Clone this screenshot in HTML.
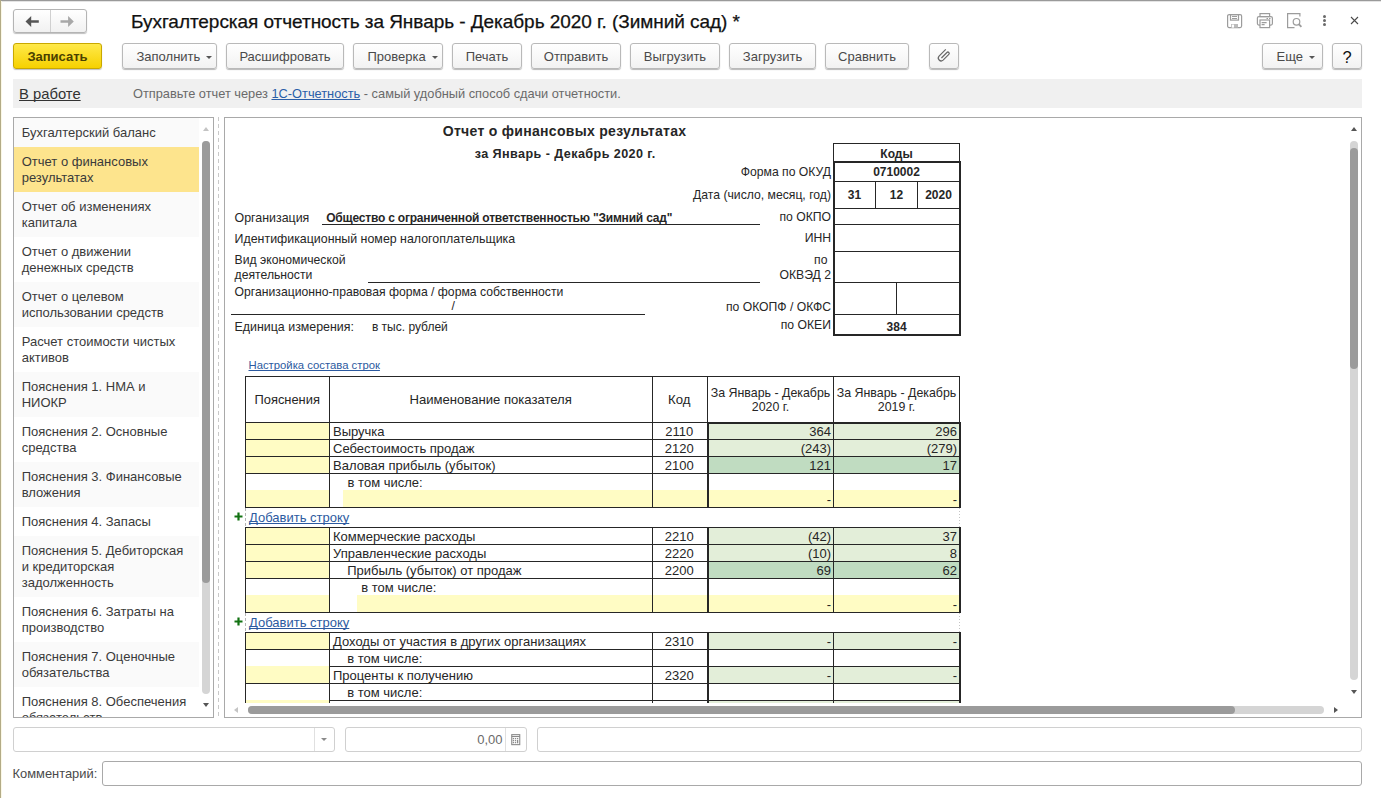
<!DOCTYPE html>
<html><head><meta charset="utf-8"><style>
html,body{margin:0;padding:0;}
body{width:1381px;height:798px;overflow:hidden;position:relative;background:#fff;font-family:"Liberation Sans",sans-serif;}
div{box-sizing:border-box;}
.btn{position:absolute;height:26px;border:1px solid #b9b9b9;border-radius:3px;background:linear-gradient(#ffffff,#f2f2f2);box-shadow:0 1px 1px rgba(0,0,0,0.28);font-size:13px;color:#4a4a4a;line-height:25px;text-align:center;white-space:nowrap;}
.dd{display:inline-block;width:0;height:0;border-left:3px solid transparent;border-right:3px solid transparent;border-top:3px solid #555;vertical-align:middle;margin-left:6px;position:relative;top:0px;}
</style></head><body>

<div style="position:absolute;left:0px;top:0px;width:1381px;height:1px;background:#9a9a9a"></div>
<div style="position:absolute;left:0px;top:1px;width:1381px;height:1px;background:#e4e4e4"></div>
<div style="position:absolute;left:0px;top:0px;width:1px;height:798px;background:#b3ab86"></div>
<div style="position:absolute;left:1px;top:1px;width:1px;height:797px;background:#fbf8e6"></div>
<div style="position:absolute;left:13px;top:9px;width:74px;height:24px;border:1px solid #b4b4b4;border-radius:3px;background:linear-gradient(#fff,#f1f1f1);box-shadow:0 1px 1px rgba(0,0,0,.25)"></div>
<div style="position:absolute;left:50px;top:10px;width:1px;height:22px;background:#d0d0d0"></div>
<svg style="position:absolute;left:25px;top:14px" width="14" height="14" viewBox="0 0 14 14"><path d="M0.5 7.5 L6.2 2 L6.2 6.2 L13.8 6.2 L13.8 8.8 L6.2 8.8 L6.2 13 Z" fill="#555"/></svg>
<svg style="position:absolute;left:60px;top:14px" width="14" height="14" viewBox="0 0 14 14"><path d="M13.8 7.5 L8.1 2 L8.1 6.2 L0.5 6.2 L0.5 8.8 L8.1 8.8 L8.1 13 Z" fill="#a8a8a8"/></svg>
<div style="position:absolute;left:131px;top:11.72px;line-height:20px;font-size:19px;font-weight:400;color:#111;white-space:nowrap;-webkit-text-stroke:0.25px #111;letter-spacing:-0.05px">Бухгалтерская отчетность за Январь - Декабрь 2020 г. (Зимний сад) *</div>
<svg style="position:absolute;left:1226px;top:13px" width="17" height="16" viewBox="0 0 17 16" fill="none" stroke="#9c9c9c" stroke-width="1.2">
<rect x="1.6" y="1.6" width="14" height="13" rx="1.5"/>
<rect x="4.5" y="1.6" width="8" height="5.5"/>
<path d="M6 3.5h5M6 5.5h5"/>
<rect x="5" y="11" width="7" height="3.6" fill="#bbb" stroke="none"/>
<rect x="5.8" y="11.6" width="2.2" height="3" fill="#fff" stroke="none"/>
</svg>
<svg style="position:absolute;left:1256px;top:12px" width="18" height="17" viewBox="0 0 18 17" fill="none" stroke="#9c9c9c" stroke-width="1.2">
<rect x="4" y="1.6" width="9.6" height="3"/>
<rect x="1.4" y="4.6" width="15" height="8.5" rx="1.5"/>
<rect x="4" y="8" width="9.6" height="7.6" fill="#fff"/>
<path d="M5.6 10.6h5M5.6 12.6h3M10.5 6.5h1.5M13 6.5h1.5"/>
</svg>
<svg style="position:absolute;left:1286px;top:12px" width="18" height="17" viewBox="0 0 18 17" fill="none" stroke="#9c9c9c" stroke-width="1.2">
<path d="M8.5 15.6H1.6V1.6h12.3v3"/>
<circle cx="10.5" cy="9.8" r="3.3"/>
<path d="M12.8 12.2l2.6 2.6" stroke-width="1.8"/>
</svg>
<div style="position:absolute;left:1322.9px;top:14.700000000000001px;width:3.2px;height:3.2px;border-radius:50%;background:#6a6a6a"></div>
<div style="position:absolute;left:1322.9px;top:18.9px;width:3.2px;height:3.2px;border-radius:50%;background:#6a6a6a"></div>
<div style="position:absolute;left:1322.9px;top:22.9px;width:3.2px;height:3.2px;border-radius:50%;background:#6a6a6a"></div>
<svg style="position:absolute;left:1350px;top:16px" width="9" height="9" viewBox="0 0 9 9"><path d="M1 1L8 8M8 1L1 8" stroke="#4a4a4a" stroke-width="1.1"/></svg>
<div style="position:absolute;left:13px;top:43px;width:89px;height:26px;border:1px solid #c9a800;border-radius:3px;background:linear-gradient(#ffe94a,#f6d100);box-shadow:0 1px 1px rgba(0,0,0,.25);font-size:13px;font-weight:700;color:#4a4100;text-align:center;line-height:25px">Записать</div>
<div class="btn" style="left:122px;top:43px;width:95px;text-align:left;padding-left:13.5px">Заполнить<span class="dd"></span></div>
<div class="btn" style="left:226px;top:43px;width:118px">Расшифровать</div>
<div class="btn" style="left:353px;top:43px;width:90px;text-align:left;padding-left:13.5px">Проверка<span class="dd"></span></div>
<div class="btn" style="left:452px;top:43px;width:70px">Печать</div>
<div class="btn" style="left:531px;top:43px;width:90px">Отправить</div>
<div class="btn" style="left:630px;top:43px;width:90px">Выгрузить</div>
<div class="btn" style="left:729px;top:43px;width:87px">Загрузить</div>
<div class="btn" style="left:825px;top:43px;width:84px">Сравнить</div>
<div class="btn" style="left:1262px;top:43px;width:61px;text-align:left;padding-left:13.5px">Еще<span class="dd"></span></div>
<div class="btn" style="left:929px;top:43px;width:30px"></div>
<svg style="position:absolute;left:935px;top:47px" width="18" height="18" viewBox="0 0 18 18" fill="none" stroke="#666" stroke-width="1.2"><path d="M10.77 2.38 L4.07 9.09 A2.85 2.85 0 0 0 8.09 13.12 L13.82 7.39 A1.35 1.35 0 0 0 11.91 5.48 L6.43 10.96"/></svg>
<div class="btn" style="left:1332px;top:43px;width:30px;font-size:16.5px;color:#111"><span style="position:relative;top:0.9px">?</span></div>
<div style="position:absolute;left:13px;top:79px;width:1349px;height:29px;background:#f0f0f0"></div>
<div style="position:absolute;left:19px;top:83.77px;line-height:20px;font-size:14.8px;font-weight:400;color:#333;white-space:nowrap;"><span style="text-decoration:underline;text-decoration-skip-ink:none">В работе</span></div>
<div style="position:absolute;left:133px;top:83.56px;line-height:20px;font-size:12.8px;font-weight:400;color:#6a6a6a;white-space:nowrap;">Отправьте отчет через <span style="color:#2a5ea8;text-decoration:underline;text-decoration-skip-ink:none">1С-Отчетность</span> - самый удобный способ сдачи отчетности.</div>
<div style="position:absolute;left:13px;top:117px;width:201px;height:601px;border:1px solid #a9a9a9;background:#fff;overflow:hidden">
<div style="position:absolute;left:0;top:0px;width:185px;height:29px;background:#fafafa"></div>
<div style="position:absolute;left:7.7px;top:4.50px;line-height:20px;font-size:13px;color:#3a3a3a;white-space:nowrap">Бухгалтерский баланс</div>
<div style="position:absolute;left:0;top:29px;width:185px;height:45px;background:#fde48d"></div>
<div style="position:absolute;left:7.7px;top:33.50px;line-height:20px;font-size:13px;color:#3a3a3a;white-space:nowrap">Отчет о финансовых</div>
<div style="position:absolute;left:7.7px;top:49.50px;line-height:20px;font-size:13px;color:#3a3a3a;white-space:nowrap">результатах</div>
<div style="position:absolute;left:0;top:74px;width:185px;height:45px;background:#fafafa"></div>
<div style="position:absolute;left:7.7px;top:78.50px;line-height:20px;font-size:13px;color:#3a3a3a;white-space:nowrap">Отчет об изменениях</div>
<div style="position:absolute;left:7.7px;top:94.50px;line-height:20px;font-size:13px;color:#3a3a3a;white-space:nowrap">капитала</div>
<div style="position:absolute;left:0;top:119px;width:185px;height:45px;background:#ffffff"></div>
<div style="position:absolute;left:7.7px;top:123.50px;line-height:20px;font-size:13px;color:#3a3a3a;white-space:nowrap">Отчет о движении</div>
<div style="position:absolute;left:7.7px;top:139.50px;line-height:20px;font-size:13px;color:#3a3a3a;white-space:nowrap">денежных средств</div>
<div style="position:absolute;left:0;top:164px;width:185px;height:45px;background:#fafafa"></div>
<div style="position:absolute;left:7.7px;top:168.50px;line-height:20px;font-size:13px;color:#3a3a3a;white-space:nowrap">Отчет о целевом</div>
<div style="position:absolute;left:7.7px;top:184.50px;line-height:20px;font-size:13px;color:#3a3a3a;white-space:nowrap">использовании средств</div>
<div style="position:absolute;left:0;top:209px;width:185px;height:45px;background:#ffffff"></div>
<div style="position:absolute;left:7.7px;top:213.50px;line-height:20px;font-size:13px;color:#3a3a3a;white-space:nowrap">Расчет стоимости чистых</div>
<div style="position:absolute;left:7.7px;top:229.50px;line-height:20px;font-size:13px;color:#3a3a3a;white-space:nowrap">активов</div>
<div style="position:absolute;left:0;top:254px;width:185px;height:45px;background:#fafafa"></div>
<div style="position:absolute;left:7.7px;top:258.50px;line-height:20px;font-size:13px;color:#3a3a3a;white-space:nowrap">Пояснения 1. НМА и</div>
<div style="position:absolute;left:7.7px;top:274.50px;line-height:20px;font-size:13px;color:#3a3a3a;white-space:nowrap">НИОКР</div>
<div style="position:absolute;left:0;top:299px;width:185px;height:45px;background:#ffffff"></div>
<div style="position:absolute;left:7.7px;top:303.50px;line-height:20px;font-size:13px;color:#3a3a3a;white-space:nowrap">Пояснения 2. Основные</div>
<div style="position:absolute;left:7.7px;top:319.50px;line-height:20px;font-size:13px;color:#3a3a3a;white-space:nowrap">средства</div>
<div style="position:absolute;left:0;top:344px;width:185px;height:45px;background:#fafafa"></div>
<div style="position:absolute;left:7.7px;top:348.50px;line-height:20px;font-size:13px;color:#3a3a3a;white-space:nowrap">Пояснения 3. Финансовые</div>
<div style="position:absolute;left:7.7px;top:364.50px;line-height:20px;font-size:13px;color:#3a3a3a;white-space:nowrap">вложения</div>
<div style="position:absolute;left:0;top:389px;width:185px;height:29px;background:#ffffff"></div>
<div style="position:absolute;left:7.7px;top:393.50px;line-height:20px;font-size:13px;color:#3a3a3a;white-space:nowrap">Пояснения 4. Запасы</div>
<div style="position:absolute;left:0;top:418px;width:185px;height:61px;background:#fafafa"></div>
<div style="position:absolute;left:7.7px;top:422.50px;line-height:20px;font-size:13px;color:#3a3a3a;white-space:nowrap">Пояснения 5. Дебиторская</div>
<div style="position:absolute;left:7.7px;top:438.50px;line-height:20px;font-size:13px;color:#3a3a3a;white-space:nowrap">и кредиторская</div>
<div style="position:absolute;left:7.7px;top:454.50px;line-height:20px;font-size:13px;color:#3a3a3a;white-space:nowrap">задолженность</div>
<div style="position:absolute;left:0;top:479px;width:185px;height:45px;background:#ffffff"></div>
<div style="position:absolute;left:7.7px;top:483.50px;line-height:20px;font-size:13px;color:#3a3a3a;white-space:nowrap">Пояснения 6. Затраты на</div>
<div style="position:absolute;left:7.7px;top:499.50px;line-height:20px;font-size:13px;color:#3a3a3a;white-space:nowrap">производство</div>
<div style="position:absolute;left:0;top:524px;width:185px;height:45px;background:#fafafa"></div>
<div style="position:absolute;left:7.7px;top:528.50px;line-height:20px;font-size:13px;color:#3a3a3a;white-space:nowrap">Пояснения 7. Оценочные</div>
<div style="position:absolute;left:7.7px;top:544.50px;line-height:20px;font-size:13px;color:#3a3a3a;white-space:nowrap">обязательства</div>
<div style="position:absolute;left:0;top:569px;width:185px;height:45px;background:#ffffff"></div>
<div style="position:absolute;left:7.7px;top:573.50px;line-height:20px;font-size:13px;color:#3a3a3a;white-space:nowrap">Пояснения 8. Обеспечения</div>
<div style="position:absolute;left:7.7px;top:589.50px;line-height:20px;font-size:13px;color:#3a3a3a;white-space:nowrap">обязательств</div>
</div>
<div style="position:absolute;left:202px;top:141px;width:8px;height:553px;border-radius:4px;background:#d5d5d5"></div>
<div style="position:absolute;left:202px;top:141px;width:8px;height:442px;border-radius:4px;background:#9b9b9b"></div>
<div style="position:absolute;left:203px;top:127px;width:0;height:0;border-left:3.5px solid transparent;border-right:3.5px solid transparent;border-bottom:4px solid #c4c4c4"></div>
<div style="position:absolute;left:203px;top:703px;width:0;height:0;border-left:3.5px solid transparent;border-right:3.5px solid transparent;border-top:4px solid #555"></div>
<div style="position:absolute;left:218px;top:117px;width:1px;height:601px;background:repeating-linear-gradient(#c9c9c9 0 4px,transparent 4px 7px)"></div>
<div style="position:absolute;left:224px;top:117px;width:1138px;height:601px;border:1px solid #a9a9a9;background:#fff"></div>
<div style="position:absolute;left:1350px;top:141px;width:8px;height:539px;border-radius:4px;background:#d5d5d5"></div>
<div style="position:absolute;left:1350px;top:148px;width:8px;height:221px;border-radius:4px;background:#9b9b9b"></div>
<div style="position:absolute;left:1351px;top:127px;width:0;height:0;border-left:3.5px solid transparent;border-right:3.5px solid transparent;border-bottom:4px solid #555"></div>
<div style="position:absolute;left:1351px;top:690px;width:0;height:0;border-left:3.5px solid transparent;border-right:3.5px solid transparent;border-top:4px solid #555"></div>
<div style="position:absolute;left:248px;top:706px;width:1076px;height:8px;border-radius:4px;background:#d5d5d5"></div>
<div style="position:absolute;left:248px;top:706px;width:987px;height:8px;border-radius:4px;background:#9b9b9b"></div>
<div style="position:absolute;left:234px;top:706.5px;width:0;height:0;border-top:3.5px solid transparent;border-bottom:3.5px solid transparent;border-right:4px solid #c4c4c4"></div>
<div style="position:absolute;left:1334px;top:706.5px;width:0;height:0;border-top:3.5px solid transparent;border-bottom:3.5px solid transparent;border-left:4px solid #555"></div>
<div style="position:absolute;left:225px;top:118px;width:1120px;height:585px;overflow:hidden">
<div style="position:absolute;left:139.60000000000002px;width:400px;top:3.15px;line-height:20px;font-size:14px;font-weight:700;color:#262626;white-space:nowrap;text-align:center;letter-spacing:0.3px">Отчет о финансовых результатах</div>
<div style="position:absolute;left:140.20000000000005px;width:400px;top:25.93px;line-height:20px;font-size:12.6px;font-weight:700;color:#262626;white-space:nowrap;text-align:center;letter-spacing:0.42px">за Январь - Декабрь 2020 г.</div>
<div style="position:absolute;left:608px;top:25px;width:127px;height:20px;border:1px solid #262626;border-bottom:none"></div>
<div style="position:absolute;left:471.5px;width:400px;top:25.84px;line-height:20px;font-size:12px;font-weight:700;color:#262626;white-space:nowrap;text-align:center;">Коды</div>
<div style="position:absolute;left:608px;top:43px;width:128px;height:175px;border:2px solid #262626"></div>
<div style="position:absolute;left:610px;top:63px;width:124px;height:1px;background:#262626"></div>
<div style="position:absolute;left:610px;top:90px;width:124px;height:1px;background:#262626"></div>
<div style="position:absolute;left:610px;top:106px;width:124px;height:1px;background:#262626"></div>
<div style="position:absolute;left:610px;top:133px;width:124px;height:1px;background:#262626"></div>
<div style="position:absolute;left:610px;top:164px;width:124px;height:1px;background:#262626"></div>
<div style="position:absolute;left:610px;top:196px;width:124px;height:1px;background:#262626"></div>
<div style="position:absolute;left:650px;top:64px;width:1px;height:26px;background:#262626"></div>
<div style="position:absolute;left:692px;top:64px;width:1px;height:26px;background:#262626"></div>
<div style="position:absolute;left:671px;top:165px;width:1px;height:31px;background:#262626"></div>
<div style="position:absolute;left:471.5px;width:400px;top:44.34px;line-height:20px;font-size:12px;font-weight:700;color:#262626;white-space:nowrap;text-align:center;">0710002</div>
<div style="position:absolute;left:429.5px;width:400px;top:67.14px;line-height:20px;font-size:12px;font-weight:700;color:#262626;white-space:nowrap;text-align:center;">31</div>
<div style="position:absolute;left:471.5px;width:400px;top:67.14px;line-height:20px;font-size:12px;font-weight:700;color:#262626;white-space:nowrap;text-align:center;">12</div>
<div style="position:absolute;left:513.5px;width:400px;top:67.14px;line-height:20px;font-size:12px;font-weight:700;color:#262626;white-space:nowrap;text-align:center;">2020</div>
<div style="position:absolute;left:471.6px;width:400px;top:199.34px;line-height:20px;font-size:12px;font-weight:700;color:#262626;white-space:nowrap;text-align:center;">384</div>
<div style="position:absolute;left:206px;width:400px;top:44.27px;line-height:20px;font-size:12.2px;font-weight:400;color:#262626;white-space:nowrap;text-align:right;">Форма по ОКУД</div>
<div style="position:absolute;left:206px;width:400px;top:67.07px;line-height:20px;font-size:12.2px;font-weight:400;color:#262626;white-space:nowrap;text-align:right;">Дата (число, месяц, год)</div>
<div style="position:absolute;left:206px;width:400px;top:89.27px;line-height:20px;font-size:12.2px;font-weight:400;color:#262626;white-space:nowrap;text-align:right;">по ОКПО</div>
<div style="position:absolute;left:206px;width:400px;top:110.37px;line-height:20px;font-size:12.2px;font-weight:400;color:#262626;white-space:nowrap;text-align:right;">ИНН</div>
<div style="position:absolute;left:206px;width:400px;top:146.97px;line-height:20px;font-size:12.2px;font-weight:400;color:#262626;white-space:nowrap;text-align:right;">ОКВЭД 2</div>
<div style="position:absolute;left:206px;width:400px;top:179.27px;line-height:20px;font-size:12.2px;font-weight:400;color:#262626;white-space:nowrap;text-align:right;">по ОКОПФ / ОКФС</div>
<div style="position:absolute;left:206px;width:400px;top:197.37px;line-height:20px;font-size:12.2px;font-weight:400;color:#262626;white-space:nowrap;text-align:right;">по ОКЕИ</div>
<div style="position:absolute;left:202.5px;width:400px;top:132.27px;line-height:20px;font-size:12.2px;font-weight:400;color:#262626;white-space:nowrap;text-align:right;">по</div>
<div style="position:absolute;left:9.599999999999994px;top:89.60px;line-height:20px;font-size:12.4px;font-weight:400;color:#262626;white-space:nowrap;">Организация</div>
<div style="position:absolute;left:101.19999999999999px;top:89.64px;line-height:20px;font-size:12px;font-weight:700;color:#262626;white-space:nowrap;letter-spacing:-0.2px">Общество с ограниченной ответственностью "Зимний сад"</div>
<div style="position:absolute;left:97px;top:106px;width:438px;height:1px;background:#262626"></div>
<div style="position:absolute;left:9.599999999999994px;top:110.60px;line-height:20px;font-size:12.4px;font-weight:400;color:#262626;white-space:nowrap;">Идентификационный номер налогоплательщика</div>
<div style="position:absolute;left:9.599999999999994px;top:132.37px;line-height:20px;font-size:12.2px;font-weight:400;color:#262626;white-space:nowrap;">Вид экономической</div>
<div style="position:absolute;left:9.599999999999994px;top:147.17px;line-height:20px;font-size:12.2px;font-weight:400;color:#262626;white-space:nowrap;">деятельности</div>
<div style="position:absolute;left:143px;top:164px;width:392px;height:1px;background:#262626"></div>
<div style="position:absolute;left:9.599999999999994px;top:163.67px;line-height:20px;font-size:12.2px;font-weight:400;color:#262626;white-space:nowrap;">Организационно-правовая форма / форма собственности</div>
<div style="position:absolute;left:226.5px;top:178.47px;line-height:20px;font-size:12.2px;font-weight:400;color:#262626;white-space:nowrap;">/</div>
<div style="position:absolute;left:6px;top:196px;width:414px;height:1px;background:#262626"></div>
<div style="position:absolute;left:9.599999999999994px;top:199.20px;line-height:20px;font-size:12.4px;font-weight:400;color:#262626;white-space:nowrap;">Единица измерения:</div>
<div style="position:absolute;left:146.89999999999998px;top:199.34px;line-height:20px;font-size:12px;font-weight:400;color:#262626;white-space:nowrap;">в тыс. рублей</div>
<div style="position:absolute;left:23.5px;top:236.88px;line-height:20px;font-size:11.3px;font-weight:400;color:#2c5aa0;white-space:nowrap;"><span style="text-decoration:underline;text-decoration-skip-ink:none">Настройка состава строк</span></div>
<div style="position:absolute;left:20px;top:258px;width:715px;height:47px;border:1px solid #262626;border-bottom:none"></div>
<div style="position:absolute;left:20px;top:304px;width:715px;height:1px;background:#262626"></div>
<div style="position:absolute;left:104px;top:258px;width:1px;height:46px;background:#262626"></div>
<div style="position:absolute;left:427px;top:258px;width:1px;height:46px;background:#262626"></div>
<div style="position:absolute;left:482px;top:258px;width:1px;height:46px;background:#262626"></div>
<div style="position:absolute;left:608px;top:258px;width:1px;height:46px;background:#262626"></div>
<div style="position:absolute;left:-137.8px;width:400px;top:272.33px;line-height:20px;font-size:12.9px;font-weight:400;color:#262626;white-space:nowrap;text-align:center;">Пояснения</div>
<div style="position:absolute;left:65.69999999999999px;width:400px;top:272.26px;line-height:20px;font-size:13.1px;font-weight:400;color:#262626;white-space:nowrap;text-align:center;">Наименование показателя</div>
<div style="position:absolute;left:254.20000000000005px;width:400px;top:272.23px;line-height:20px;font-size:13.2px;font-weight:400;color:#262626;white-space:nowrap;text-align:center;">Код</div>
<div style="position:absolute;left:345.5px;width:400px;top:264.50px;line-height:20px;font-size:12.4px;font-weight:400;color:#262626;white-space:nowrap;text-align:center;">За Январь - Декабрь</div>
<div style="position:absolute;left:345.5px;width:400px;top:279.40px;line-height:20px;font-size:12.4px;font-weight:400;color:#262626;white-space:nowrap;text-align:center;">2020 г.</div>
<div style="position:absolute;left:471.5px;width:400px;top:264.50px;line-height:20px;font-size:12.4px;font-weight:400;color:#262626;white-space:nowrap;text-align:center;">За Январь - Декабрь</div>
<div style="position:absolute;left:471.5px;width:400px;top:279.40px;line-height:20px;font-size:12.4px;font-weight:400;color:#262626;white-space:nowrap;text-align:center;">2019 г.</div>
<div style="position:absolute;left:484px;top:305px;width:124px;height:16px;background:#e3eed9"></div>
<div style="position:absolute;left:609px;top:305px;width:125px;height:16px;background:#e3eed9"></div>
<div style="position:absolute;left:21px;top:305px;width:83px;height:16px;background:#fffcc4"></div>
<div style="position:absolute;left:484px;top:322px;width:124px;height:16px;background:#e3eed9"></div>
<div style="position:absolute;left:609px;top:322px;width:125px;height:16px;background:#e3eed9"></div>
<div style="position:absolute;left:21px;top:322px;width:83px;height:16px;background:#fffcc4"></div>
<div style="position:absolute;left:484px;top:339px;width:124px;height:16px;background:#c0dcc1"></div>
<div style="position:absolute;left:609px;top:339px;width:125px;height:16px;background:#c0dcc1"></div>
<div style="position:absolute;left:21px;top:339px;width:83px;height:16px;background:#fffcc4"></div>
<div style="position:absolute;left:21px;top:372px;width:83px;height:17px;background:#fffcc4"></div>
<div style="position:absolute;left:118px;top:372px;width:309px;height:17px;background:#fffcc4"></div>
<div style="position:absolute;left:428px;top:372px;width:54px;height:17px;background:#fffcc4"></div>
<div style="position:absolute;left:484px;top:372px;width:124px;height:17px;background:#fffcc4"></div>
<div style="position:absolute;left:609px;top:372px;width:125px;height:17px;background:#fffcc4"></div>
<div style="position:absolute;left:20px;top:304px;width:1px;height:86px;background:#262626"></div>
<div style="position:absolute;left:104px;top:304px;width:1px;height:86px;background:#262626"></div>
<div style="position:absolute;left:427px;top:304px;width:1px;height:86px;background:#262626"></div>
<div style="position:absolute;left:482px;top:304px;width:2px;height:86px;background:#262626"></div>
<div style="position:absolute;left:608px;top:304px;width:1px;height:86px;background:#262626"></div>
<div style="position:absolute;left:734px;top:304px;width:2px;height:86px;background:#262626"></div>
<div style="position:absolute;left:20px;top:304px;width:716px;height:1px;background:#262626"></div>
<div style="position:absolute;left:20px;top:321px;width:716px;height:1px;background:#262626"></div>
<div style="position:absolute;left:20px;top:338px;width:716px;height:1px;background:#262626"></div>
<div style="position:absolute;left:20px;top:355px;width:716px;height:1px;background:#262626"></div>
<div style="position:absolute;left:20px;top:389px;width:716px;height:1px;background:#262626"></div>
<div style="position:absolute;left:108px;top:303.70px;line-height:20px;font-size:13px;font-weight:400;color:#262626;white-space:nowrap;">Выручка</div>
<div style="position:absolute;left:254.20000000000005px;width:400px;top:303.90px;line-height:20px;font-size:13px;font-weight:400;color:#262626;white-space:nowrap;text-align:center;">2110</div>
<div style="position:absolute;left:206px;width:400px;top:303.90px;line-height:20px;font-size:13px;font-weight:400;color:#262626;white-space:nowrap;text-align:right;">364</div>
<div style="position:absolute;left:332px;width:400px;top:303.90px;line-height:20px;font-size:13px;font-weight:400;color:#262626;white-space:nowrap;text-align:right;">296</div>
<div style="position:absolute;left:108px;top:320.70px;line-height:20px;font-size:13px;font-weight:400;color:#262626;white-space:nowrap;">Себестоимость продаж</div>
<div style="position:absolute;left:254.20000000000005px;width:400px;top:320.90px;line-height:20px;font-size:13px;font-weight:400;color:#262626;white-space:nowrap;text-align:center;">2120</div>
<div style="position:absolute;left:206px;width:400px;top:320.90px;line-height:20px;font-size:13px;font-weight:400;color:#262626;white-space:nowrap;text-align:right;">(243)</div>
<div style="position:absolute;left:332px;width:400px;top:320.90px;line-height:20px;font-size:13px;font-weight:400;color:#262626;white-space:nowrap;text-align:right;">(279)</div>
<div style="position:absolute;left:108px;top:337.70px;line-height:20px;font-size:13px;font-weight:400;color:#262626;white-space:nowrap;">Валовая прибыль (убыток)</div>
<div style="position:absolute;left:254.20000000000005px;width:400px;top:337.90px;line-height:20px;font-size:13px;font-weight:400;color:#262626;white-space:nowrap;text-align:center;">2100</div>
<div style="position:absolute;left:206px;width:400px;top:337.90px;line-height:20px;font-size:13px;font-weight:400;color:#262626;white-space:nowrap;text-align:right;">121</div>
<div style="position:absolute;left:332px;width:400px;top:337.90px;line-height:20px;font-size:13px;font-weight:400;color:#262626;white-space:nowrap;text-align:right;">17</div>
<div style="position:absolute;left:122.60000000000002px;top:355.30px;line-height:20px;font-size:13px;font-weight:400;color:#262626;white-space:nowrap;">в том числе:</div>
<div style="position:absolute;left:206px;width:400px;top:371.50px;line-height:20px;font-size:13px;font-weight:400;color:#262626;white-space:nowrap;text-align:right;">-</div>
<div style="position:absolute;left:332px;width:400px;top:371.50px;line-height:20px;font-size:13px;font-weight:400;color:#262626;white-space:nowrap;text-align:right;">-</div>
<div style="position:absolute;left:482px;top:304px;width:254px;height:2px;background:#262626"></div>
<div style="position:absolute;left:20px;top:390px;width:1px;height:19px;background:repeating-linear-gradient(#b4b4b4 0 3px,transparent 3px 5px)"></div>
<div style="position:absolute;left:734px;top:390px;width:1px;height:19px;background:repeating-linear-gradient(#c4c4c4 0 1px,transparent 1px 3px)"></div>
<div style="position:absolute;left:24px;top:389.50px;line-height:20px;font-size:13px;font-weight:400;color:#2c5aa0;white-space:nowrap;"><span style="text-decoration:underline;text-decoration-skip-ink:none">Добавить строку</span></div>
<svg style="position:absolute;left:9px;top:394px" width="9" height="9" viewBox="0 0 9 9"><path d="M4.5 0.5v8M0.5 4.5h8" stroke="#127212" stroke-width="2.2"/></svg>
<div style="position:absolute;left:484px;top:410px;width:124px;height:16px;background:#e3eed9"></div>
<div style="position:absolute;left:609px;top:410px;width:125px;height:16px;background:#e3eed9"></div>
<div style="position:absolute;left:21px;top:410px;width:83px;height:16px;background:#fffcc4"></div>
<div style="position:absolute;left:484px;top:427px;width:124px;height:16px;background:#e3eed9"></div>
<div style="position:absolute;left:609px;top:427px;width:125px;height:16px;background:#e3eed9"></div>
<div style="position:absolute;left:21px;top:427px;width:83px;height:16px;background:#fffcc4"></div>
<div style="position:absolute;left:484px;top:444px;width:124px;height:16px;background:#c0dcc1"></div>
<div style="position:absolute;left:609px;top:444px;width:125px;height:16px;background:#c0dcc1"></div>
<div style="position:absolute;left:21px;top:444px;width:83px;height:16px;background:#fffcc4"></div>
<div style="position:absolute;left:21px;top:477px;width:83px;height:17px;background:#fffcc4"></div>
<div style="position:absolute;left:132px;top:477px;width:295px;height:17px;background:#fffcc4"></div>
<div style="position:absolute;left:428px;top:477px;width:54px;height:17px;background:#fffcc4"></div>
<div style="position:absolute;left:484px;top:477px;width:124px;height:17px;background:#fffcc4"></div>
<div style="position:absolute;left:609px;top:477px;width:125px;height:17px;background:#fffcc4"></div>
<div style="position:absolute;left:20px;top:409px;width:1px;height:86px;background:#262626"></div>
<div style="position:absolute;left:104px;top:409px;width:1px;height:86px;background:#262626"></div>
<div style="position:absolute;left:427px;top:409px;width:1px;height:86px;background:#262626"></div>
<div style="position:absolute;left:482px;top:409px;width:2px;height:86px;background:#262626"></div>
<div style="position:absolute;left:608px;top:409px;width:1px;height:86px;background:#262626"></div>
<div style="position:absolute;left:734px;top:409px;width:2px;height:86px;background:#262626"></div>
<div style="position:absolute;left:20px;top:409px;width:716px;height:1px;background:#262626"></div>
<div style="position:absolute;left:20px;top:426px;width:716px;height:1px;background:#262626"></div>
<div style="position:absolute;left:20px;top:443px;width:716px;height:1px;background:#262626"></div>
<div style="position:absolute;left:20px;top:460px;width:716px;height:1px;background:#262626"></div>
<div style="position:absolute;left:20px;top:494px;width:716px;height:1px;background:#262626"></div>
<div style="position:absolute;left:108px;top:408.70px;line-height:20px;font-size:13px;font-weight:400;color:#262626;white-space:nowrap;">Коммерческие расходы</div>
<div style="position:absolute;left:254.20000000000005px;width:400px;top:408.90px;line-height:20px;font-size:13px;font-weight:400;color:#262626;white-space:nowrap;text-align:center;">2210</div>
<div style="position:absolute;left:206px;width:400px;top:408.90px;line-height:20px;font-size:13px;font-weight:400;color:#262626;white-space:nowrap;text-align:right;">(42)</div>
<div style="position:absolute;left:332px;width:400px;top:408.90px;line-height:20px;font-size:13px;font-weight:400;color:#262626;white-space:nowrap;text-align:right;">37</div>
<div style="position:absolute;left:108px;top:425.70px;line-height:20px;font-size:13px;font-weight:400;color:#262626;white-space:nowrap;">Управленческие расходы</div>
<div style="position:absolute;left:254.20000000000005px;width:400px;top:425.90px;line-height:20px;font-size:13px;font-weight:400;color:#262626;white-space:nowrap;text-align:center;">2220</div>
<div style="position:absolute;left:206px;width:400px;top:425.90px;line-height:20px;font-size:13px;font-weight:400;color:#262626;white-space:nowrap;text-align:right;">(10)</div>
<div style="position:absolute;left:332px;width:400px;top:425.90px;line-height:20px;font-size:13px;font-weight:400;color:#262626;white-space:nowrap;text-align:right;">8</div>
<div style="position:absolute;left:122.19999999999999px;top:442.70px;line-height:20px;font-size:13px;font-weight:400;color:#262626;white-space:nowrap;">Прибыль (убыток) от продаж</div>
<div style="position:absolute;left:254.20000000000005px;width:400px;top:442.90px;line-height:20px;font-size:13px;font-weight:400;color:#262626;white-space:nowrap;text-align:center;">2200</div>
<div style="position:absolute;left:206px;width:400px;top:442.90px;line-height:20px;font-size:13px;font-weight:400;color:#262626;white-space:nowrap;text-align:right;">69</div>
<div style="position:absolute;left:332px;width:400px;top:442.90px;line-height:20px;font-size:13px;font-weight:400;color:#262626;white-space:nowrap;text-align:right;">62</div>
<div style="position:absolute;left:136.3px;top:460.30px;line-height:20px;font-size:13px;font-weight:400;color:#262626;white-space:nowrap;">в том числе:</div>
<div style="position:absolute;left:206px;width:400px;top:476.50px;line-height:20px;font-size:13px;font-weight:400;color:#262626;white-space:nowrap;text-align:right;">-</div>
<div style="position:absolute;left:332px;width:400px;top:476.50px;line-height:20px;font-size:13px;font-weight:400;color:#262626;white-space:nowrap;text-align:right;">-</div>
<div style="position:absolute;left:20px;top:495px;width:1px;height:19px;background:repeating-linear-gradient(#b4b4b4 0 3px,transparent 3px 5px)"></div>
<div style="position:absolute;left:734px;top:495px;width:1px;height:19px;background:repeating-linear-gradient(#c4c4c4 0 1px,transparent 1px 3px)"></div>
<div style="position:absolute;left:24px;top:494.50px;line-height:20px;font-size:13px;font-weight:400;color:#2c5aa0;white-space:nowrap;"><span style="text-decoration:underline;text-decoration-skip-ink:none">Добавить строку</span></div>
<svg style="position:absolute;left:9px;top:499px" width="9" height="9" viewBox="0 0 9 9"><path d="M4.5 0.5v8M0.5 4.5h8" stroke="#127212" stroke-width="2.2"/></svg>
<div style="position:absolute;left:484px;top:515px;width:124px;height:16px;background:#e3eed9"></div>
<div style="position:absolute;left:609px;top:515px;width:125px;height:16px;background:#e3eed9"></div>
<div style="position:absolute;left:21px;top:515px;width:83px;height:16px;background:#fffcc4"></div>
<div style="position:absolute;left:484px;top:549px;width:124px;height:16px;background:#e3eed9"></div>
<div style="position:absolute;left:609px;top:549px;width:125px;height:16px;background:#e3eed9"></div>
<div style="position:absolute;left:21px;top:548px;width:83px;height:17px;background:#fffcc4"></div>
<div style="position:absolute;left:484px;top:583px;width:124px;height:16px;background:#e3eed9"></div>
<div style="position:absolute;left:609px;top:583px;width:125px;height:16px;background:#e3eed9"></div>
<div style="position:absolute;left:21px;top:582px;width:83px;height:17px;background:#fffcc4"></div>
<div style="position:absolute;left:20px;top:514px;width:1px;height:86px;background:#262626"></div>
<div style="position:absolute;left:104px;top:514px;width:1px;height:86px;background:#262626"></div>
<div style="position:absolute;left:427px;top:514px;width:1px;height:86px;background:#262626"></div>
<div style="position:absolute;left:482px;top:514px;width:2px;height:86px;background:#262626"></div>
<div style="position:absolute;left:608px;top:514px;width:1px;height:86px;background:#262626"></div>
<div style="position:absolute;left:734px;top:514px;width:2px;height:86px;background:#262626"></div>
<div style="position:absolute;left:20px;top:514px;width:716px;height:1px;background:#262626"></div>
<div style="position:absolute;left:20px;top:531px;width:716px;height:1px;background:#262626"></div>
<div style="position:absolute;left:104px;top:548px;width:632px;height:1px;background:#262626"></div>
<div style="position:absolute;left:20px;top:565px;width:716px;height:1px;background:#262626"></div>
<div style="position:absolute;left:104px;top:582px;width:632px;height:1px;background:#262626"></div>
<div style="position:absolute;left:20px;top:599px;width:716px;height:1px;background:#262626"></div>
<div style="position:absolute;left:108px;top:513.70px;line-height:20px;font-size:13px;font-weight:400;color:#262626;white-space:nowrap;">Доходы от участия в других организациях</div>
<div style="position:absolute;left:254.20000000000005px;width:400px;top:513.90px;line-height:20px;font-size:13px;font-weight:400;color:#262626;white-space:nowrap;text-align:center;">2310</div>
<div style="position:absolute;left:206px;width:400px;top:513.90px;line-height:20px;font-size:13px;font-weight:400;color:#262626;white-space:nowrap;text-align:right;">-</div>
<div style="position:absolute;left:332px;width:400px;top:513.90px;line-height:20px;font-size:13px;font-weight:400;color:#262626;white-space:nowrap;text-align:right;">-</div>
<div style="position:absolute;left:122.19999999999999px;top:530.70px;line-height:20px;font-size:13px;font-weight:400;color:#262626;white-space:nowrap;">в том числе:</div>
<div style="position:absolute;left:108px;top:547.70px;line-height:20px;font-size:13px;font-weight:400;color:#262626;white-space:nowrap;">Проценты к получению</div>
<div style="position:absolute;left:254.20000000000005px;width:400px;top:547.90px;line-height:20px;font-size:13px;font-weight:400;color:#262626;white-space:nowrap;text-align:center;">2320</div>
<div style="position:absolute;left:206px;width:400px;top:547.90px;line-height:20px;font-size:13px;font-weight:400;color:#262626;white-space:nowrap;text-align:right;">-</div>
<div style="position:absolute;left:332px;width:400px;top:547.90px;line-height:20px;font-size:13px;font-weight:400;color:#262626;white-space:nowrap;text-align:right;">-</div>
<div style="position:absolute;left:122.19999999999999px;top:564.70px;line-height:20px;font-size:13px;font-weight:400;color:#262626;white-space:nowrap;">в том числе:</div>
</div>
<div style="position:absolute;left:13px;top:727px;width:322px;height:25px;border:1px solid #d0d0d0;border-radius:3px;background:#fff"></div>
<div style="position:absolute;left:314px;top:728px;width:1px;height:23px;background:#e0e0e0"></div>
<div style="position:absolute;left:320.5px;top:737.5px;width:0;height:0;border-left:3.5px solid transparent;border-right:3.5px solid transparent;border-top:3.5px solid #8a8a8a"></div>
<div style="position:absolute;left:345px;top:727px;width:182px;height:25px;border:1px solid #d0d0d0;border-radius:3px;background:#fff"></div>
<div style="position:absolute;left:505px;top:728px;width:1px;height:23px;background:#e0e0e0"></div>
<div style="position:absolute;right:878.5px;top:729.50px;line-height:20px;font-size:13px;font-weight:400;color:#6a6a6a;white-space:nowrap;text-align:right;">0,00</div>
<svg style="position:absolute;left:510px;top:733px" width="12" height="13" viewBox="0 0 12 13"><rect x="1.75" y="1.65" width="8" height="10" fill="none" stroke="#8a8a8a" stroke-width="1.1"/><path d="M1.7 3.5H9.8" stroke="#8a8a8a" stroke-width="1.1"/><g fill="#8a8a8a"><rect x="2.75" y="4.949999999999999" width="1.3" height="1.3"/><rect x="4.85" y="4.949999999999999" width="1.3" height="1.3"/><rect x="6.949999999999999" y="4.949999999999999" width="1.3" height="1.3"/><rect x="2.75" y="6.949999999999999" width="1.3" height="1.3"/><rect x="4.85" y="6.949999999999999" width="1.3" height="1.3"/><rect x="2.75" y="8.95" width="1.3" height="1.3"/><rect x="4.85" y="8.95" width="1.3" height="1.3"/><rect x="6.95" y="7" width="1.3" height="3.3"/></g></svg>
<div style="position:absolute;left:537px;top:727px;width:825px;height:25px;border:1px solid #d0d0d0;border-radius:3px;background:#fff"></div>
<div style="position:absolute;left:12.5px;top:764.43px;line-height:20px;font-size:12.9px;font-weight:400;color:#4a4a4a;white-space:nowrap;">Комментарий:</div>
<div style="position:absolute;left:102px;top:761px;width:1260px;height:25px;border:1px solid #a9a9a9;border-radius:3px;background:#fff"></div>
</body></html>
